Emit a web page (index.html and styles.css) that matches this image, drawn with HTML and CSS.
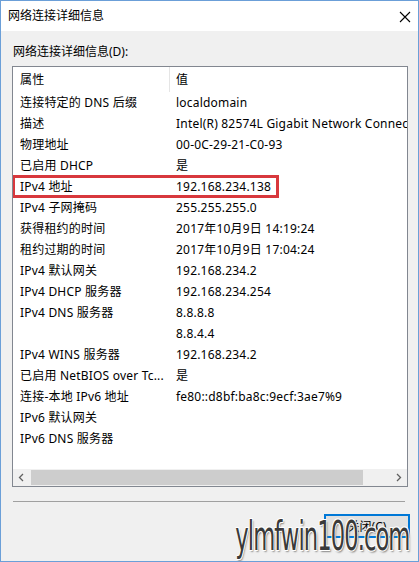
FILE: index.html
```html
<!doctype html>
<html lang="zh-CN">
<head>
    <meta charset="utf-8">
    <meta name="viewport" content="width=device-width, initial-scale=1">
    <title>网络连接详细信息</title>
    <link rel="stylesheet" href="styles.css">
</head>
<body>
    <div class="window">
        <div class="titlebar">
            <span class="title">网络连接详细信息</span>
            <svg class="close" width="12" height="12" viewBox="0 0 12 12">
                <path d="M1 1 L11 11 M11 1 L1 11" stroke="#000" stroke-width="1.1" fill="none"/>
            </svg>
        </div>

        <div class="content">
            <div class="label">网络连接详细信息(D):</div>

            <div class="list">
                <div class="list-header">
                    <span class="cell">属性</span>
                    <span class="cell value">值</span>
                </div>
                <div class="rows">
                    <div class="row"><span class="cell">连接特定的 DNS 后缀</span><span class="cell value">localdomain</span></div>
                    <div class="row"><span class="cell">描述</span><span class="cell value">Intel(R) 82574L Gigabit Network Connection</span></div>
                    <div class="row"><span class="cell">物理地址</span><span class="cell value">00-0C-29-21-C0-93</span></div>
                    <div class="row"><span class="cell">已启用 DHCP</span><span class="cell value">是</span></div>
                    <div class="row marked"><span class="cell">IPv4 地址</span><span class="cell value">192.168.234.138</span></div>
                    <div class="row"><span class="cell">IPv4 子网掩码</span><span class="cell value">255.255.255.0</span></div>
                    <div class="row"><span class="cell">获得租约的时间</span><span class="cell value">2017年10月9日 14:19:24</span></div>
                    <div class="row"><span class="cell">租约过期的时间</span><span class="cell value">2017年10月9日 17:04:24</span></div>
                    <div class="row"><span class="cell">IPv4 默认网关</span><span class="cell value">192.168.234.2</span></div>
                    <div class="row"><span class="cell">IPv4 DHCP 服务器</span><span class="cell value">192.168.234.254</span></div>
                    <div class="row"><span class="cell">IPv4 DNS 服务器</span><span class="cell value">8.8.8.8</span></div>
                    <div class="row"><span class="cell"></span><span class="cell value">8.8.4.4</span></div>
                    <div class="row"><span class="cell">IPv4 WINS 服务器</span><span class="cell value">192.168.234.2</span></div>
                    <div class="row"><span class="cell">已启用 NetBIOS over Tc...</span><span class="cell value">是</span></div>
                    <div class="row"><span class="cell">连接-本地 IPv6 地址</span><span class="cell value">fe80::d8bf:ba8c:9ecf:3ae7%9</span></div>
                    <div class="row"><span class="cell">IPv6 默认网关</span><span class="cell value"></span></div>
                    <div class="row"><span class="cell">IPv6 DNS 服务器</span><span class="cell value"></span></div>
                </div>
                <div class="hscroll">
                    <svg class="arrow" width="17" height="17" viewBox="0 0 17 17">
                        <path d="M10 5 L6.5 8.5 L10 12" stroke="#606060" stroke-width="1.3" fill="none"/>
                    </svg>
                    <div class="track"><div class="thumb"></div></div>
                    <svg class="arrow" width="17" height="17" viewBox="0 0 17 17">
                        <path d="M7 5 L10.5 8.5 L7 12" stroke="#606060" stroke-width="1.3" fill="none"/>
                    </svg>
                </div>
            </div>

            <div class="separator"></div>

            <div class="actions">
                <button class="btn">关闭(C)</button>
            </div>

            <div class="watermark">ylmfwin100.com</div>
        </div>
    </div>
</body>
</html>
```

FILE: styles.css
```css
/*
 * Reset
 */

*,
*::before,
*::after {
    box-sizing: border-box;
    margin: 0;
    padding: 0;
}

body {
    background: #fff;
    color: #000;
    font-family: "Noto Sans", "Noto Sans CJK SC", sans-serif;
    font-size: 12px;
    line-height: 16px;
}

/*
 * Window
 */

.window {
    border: 1px solid #6b9fd8;
    display: flex;
    flex-direction: column;
    height: 562px;
    width: 419px;
}

.titlebar {
    align-items: center;
    background: #fff;
    display: flex;
    flex: 0 0 30px;
    justify-content: space-between;
    padding: 0 7px 0 7px;
}

.close {
    margin-top: 1px;
}

.content {
    background: #f0f0f0;
    flex: 1;
    padding: 13px 10px 0 11px;
    position: relative;
}

.label {
    margin-left: 1px;
}

/*
 * List view
 */

.list {
    background: #fff;
    border: 1px solid #828790;
    display: flex;
    flex-direction: column;
    height: 421px;
    margin-top: 6px;
    overflow: hidden;
}

.list-header,
.row {
    display: grid;
    grid-template-columns: 156px 1fr;
    letter-spacing: 0.2px;
    white-space: nowrap;
}

.list-header {
    height: 25px;
}

.list-header .cell {
    line-height: 25px;
}

.list-header .value {
    border-left: 1px solid #e5e5e5;
    padding-left: 6px;
}

.rows {
    flex: 1;
}

.row {
    height: 21px;
    position: relative;
}

.cell {
    line-height: 21px;
    overflow: hidden;
    padding-left: 7px;
}

.value {
    padding-left: 7px;
}

.marked::after {
    border: 3px solid #d8383d;
    content: "";
    height: 23px;
    left: -1px;
    position: absolute;
    top: -1px;
    width: 267px;
}

/*
 * Horizontal scrollbar
 */

.hscroll {
    background: #f0f0f0;
    display: flex;
    height: 17px;
}

.arrow {
    flex: 0 0 17px;
}

.track {
    flex: 1;
    padding: 1px 0;
}

.thumb {
    background: #cdcdcd;
    height: 15px;
    margin-left: 1px;
    width: 332px;
}

/*
 * Footer
 */

.separator {
    border-top: 1px solid #a0a0a0;
    margin: 14px 3px 0 1px;
}

.actions {
    display: flex;
    justify-content: flex-end;
    margin-top: 12px;
}

.btn {
    background: #e1e1e1;
    border: 2px solid #0078d7;
    font-family: "Noto Sans", "Noto Sans CJK SC", sans-serif;
    font-size: 12px;
    height: 24px;
    margin-right: -2px;
    width: 86px;
}

.watermark {
    bottom: 4px;
    color: #3a3a3a;
    font-family: "DejaVu Sans Condensed", "DejaVu Sans", sans-serif;
    font-size: 40px;
    letter-spacing: -1.5px;
    line-height: 42px;
    position: absolute;
    right: 9px;
    text-shadow:
        1px 1px 0 #fff, -1px -1px 0 #fff, 1px -1px 0 #fff, -1px 1px 0 #fff,
        2px 2px 2px #888;
    transform: scaleX(0.63);
    transform-origin: right bottom;
}
```
